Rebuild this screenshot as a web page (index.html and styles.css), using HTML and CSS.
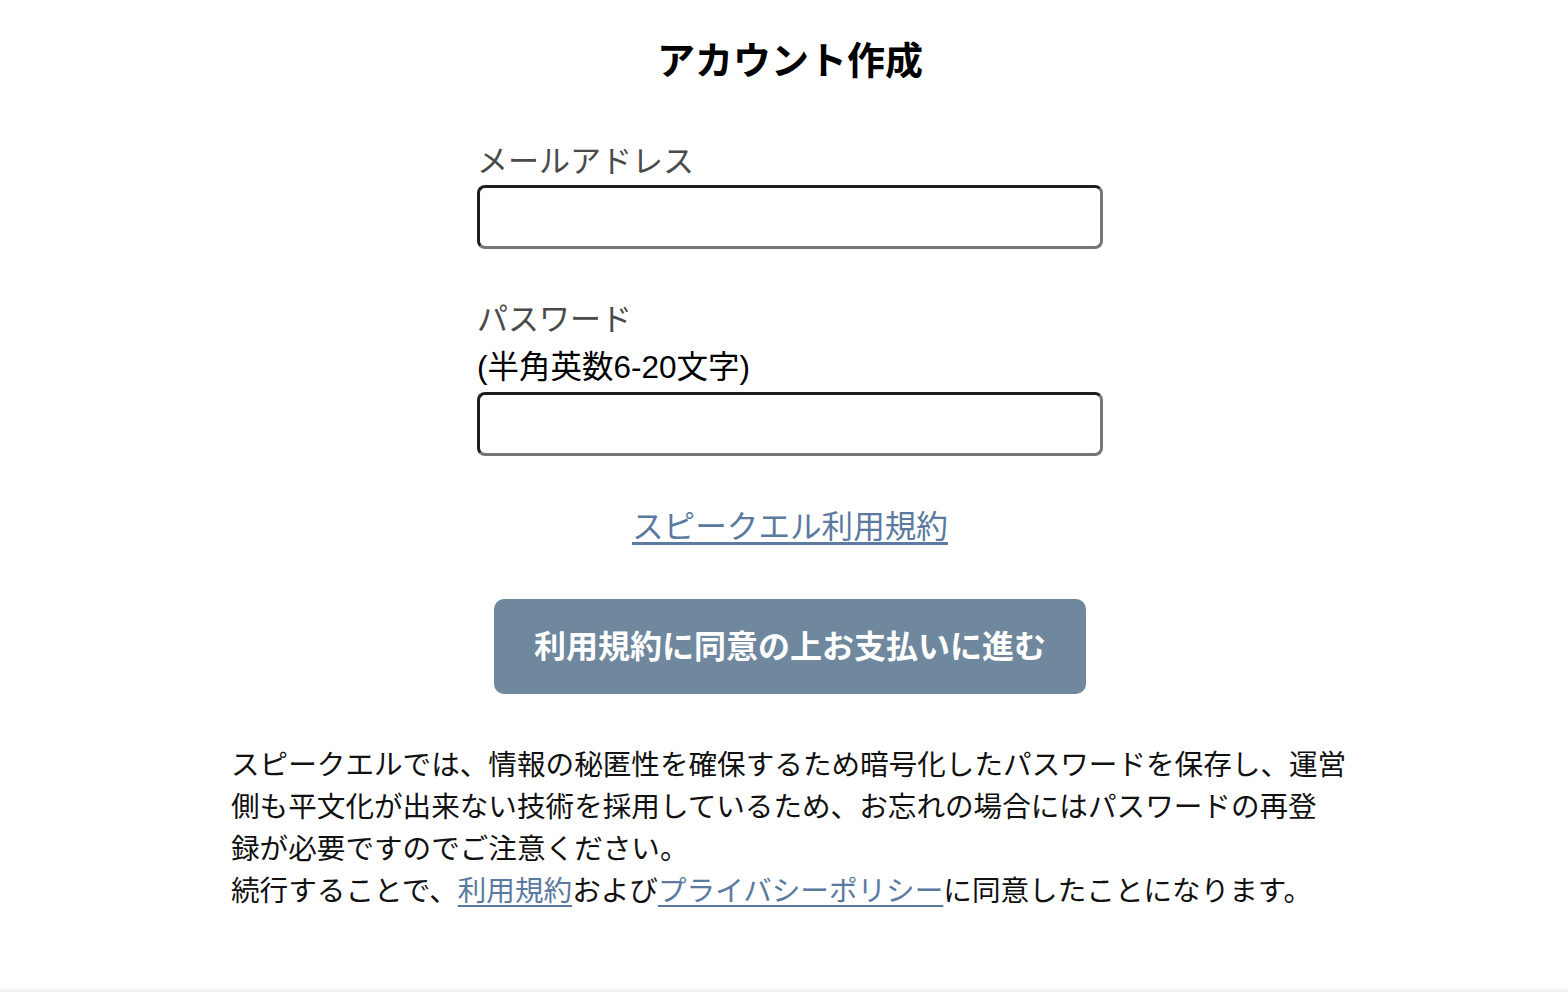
FILE: index.html
```html
<!DOCTYPE html>
<html lang="ja">
<head>
    <meta charset="UTF-8">
    <meta name="viewport" content="width=device-width, initial-scale=1.0">
    <title>アカウント作成</title>
    <link rel="stylesheet" href="styles.css">
</head>
<body>
    <div class="page">
        <h1>アカウント作成</h1>
        <form class="signup-form">
            <div class="form-group">
                <label for="email" class="label">メールアドレス</label>
                <input type="email" id="email">
            </div>
            <div class="form-group">
                <label for="password" class="label">パスワード</label>
                <div class="sub-label">(半角英数6-20文字)</div>
                <input type="password" id="password">
            </div>
            <div class="terms-link">
                <a href="#">スピークエル利用規約</a>
            </div>
            <button type="button" class="submit-btn">利用規約に同意の上お支払いに進む</button>
        </form>
        <p class="notice">
            スピークエルでは、情報の秘匿性を確保するため暗号化したパスワードを保存し、運営<br>側も平文化が出来ない技術を採用しているため、お忘れの場合にはパスワードの再登<br>録が必要ですのでご注意ください。<br>
            続行することで、<a href="#">利用規約</a>および<a href="#">プライバシーポリシー</a>に同意したことになります。
        </p>
    </div>
    <div class="footer"></div>
</body>
</html>
```

FILE: styles.css
```css
body {
    margin: 0;
    font-family: "Liberation Sans", "Noto Sans CJK JP", sans-serif;
    color: #111;
    background-color: #fff;
}
.page {
    min-height: 989px;
    padding-left: 12px;
    box-sizing: border-box;
    overflow: hidden;
}
h1 {
    margin: 33px 0 0;
    font-size: 38px;
    line-height: 56px;
    font-weight: bold;
    text-align: center;
    color: #000;
}
.signup-form {
    width: 626px;
    margin: 46px auto 0;
}
.form-group { margin-bottom: 44px; }
.label {
    display: block;
    padding-top: 4px;
    font-size: 31px;
    line-height: 46px;
    color: #4a4a4a;
}
.sub-label {
    font-size: 31.5px;
    line-height: 49px;
    color: #000;
}
input {
    display: block;
    width: 100%;
    height: 64px;
    box-sizing: border-box;
    border: 3px solid;
    border-color: #1e1e1e #767676 #767676 #1e1e1e;
    border-radius: 8px;
    padding: 0 12px;
    font-size: 26px;
    outline: none;
}
.terms-link {
    margin-top: 46px;
    text-align: center;
    font-size: 31.6px;
    line-height: 50px;
}
a {
    color: #5a7aa0;
    text-decoration: underline;
    text-underline-offset: 4px;
}
.submit-btn {
    display: block;
    width: 592px;
    height: 95px;
    margin: 47px auto 0;
    padding: 0 0 5px;
    background-color: #6f889d;
    color: #fff;
    border: none;
    border-radius: 10px;
    font-family: inherit;
    font-size: 32px;
    font-weight: bold;
    cursor: pointer;
}
.notice {
    width: 1118px;
    margin: 50px auto 0;
    font-size: 28.6px;
    line-height: 42px;
    color: #111;
}
.notice a { text-underline-offset: 4px; }
.footer {
    height: 40px;
    background-color: #f2f2f2;
}
```
